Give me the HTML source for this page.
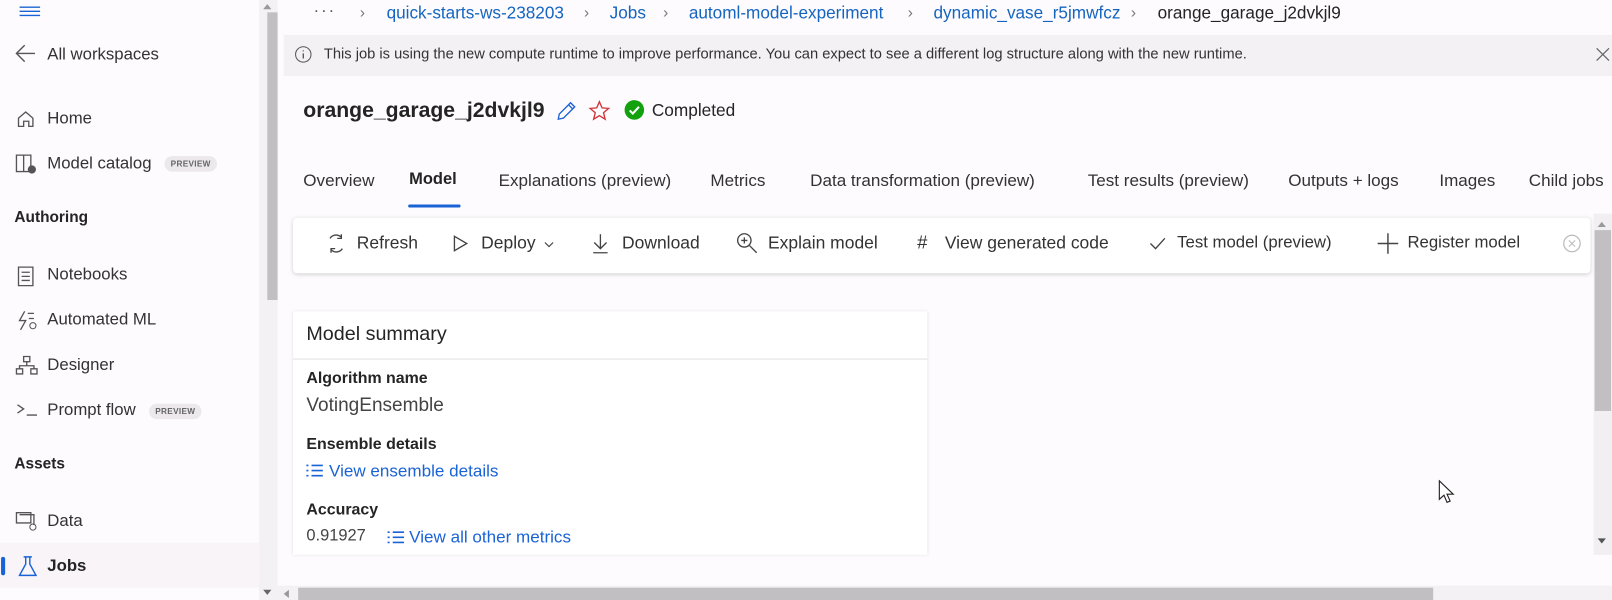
<!DOCTYPE html>
<html><head><meta charset="utf-8"><style>
*{margin:0;padding:0;box-sizing:border-box}
html,body{width:1612px;height:600px;overflow:hidden;background:#fdfbfd}
body{font-family:"Liberation Sans",sans-serif;color:#242424}
#w{position:absolute;left:0;top:0;width:1568px;height:584px;transform:scale(1.0281,1.0274);transform-origin:0 0}
.a{position:absolute;white-space:nowrap}
.side{left:0;top:0;width:252px;height:584px;background:#fdfbfd}
.nav{font-size:16.3px;color:#333}
.hd{font-size:15px;font-weight:bold;color:#242424}
.pv{font-size:8px;font-weight:bold;color:#666;background:#ece8ec;border-radius:9px;padding:3px 6px;letter-spacing:.3px}
.bc{font-size:16.7px;color:#1565c0;top:3px}
.sep{color:#777;font-size:15px;top:4px}
.tab{font-size:16.6px;color:#333;top:166px}
.tb{font-size:17px;color:#333;top:227px}
</style></head><body><div id="w">
<div class="a side"></div>
<div class="a" style="left:252px;top:0;width:18px;height:584px;background:#f3f1f3"></div>
<div class="a" style="left:260px;top:12px;width:10px;height:280px;background:#c1bfc1"></div>
<div class="a" style="left:256px;top:574px;border:4px solid transparent;border-top:5px solid #666"></div>
<div class="a" style="left:256px;top:0px;border:4px solid transparent;border-bottom:5px solid #999"></div>

<svg class="a" style="left:19px;top:6px" width="22" height="10"><path d="M0 1h20M0 5h20M0 9h20" stroke="#1a63d6" stroke-width="1.3"/></svg>
<svg class="a" style="left:14px;top:42px" width="22" height="20"><path d="M20 10H2M10 2L2 10l8 8" stroke="#555" fill="none" stroke-width="1.4"/></svg>
<div class="a nav" style="left:46px;top:44px">All workspaces</div>

<svg class="a" style="left:16px;top:106px" width="20" height="20"><path d="M2 9L9 3l7 6v8h-4v-5H7v5H2z" stroke="#555" fill="none" stroke-width="1.3"/></svg>
<div class="a nav" style="left:46px;top:106px">Home</div>
<svg class="a" style="left:15px;top:149px" width="22" height="22"><path d="M1 2h14v16H1zM8 2v16" stroke="#555" fill="none" stroke-width="1.3"/><circle cx="16" cy="16" r="4" fill="#555"/></svg>
<div class="a nav" style="left:46px;top:150px">Model catalog</div>
<div class="a pv" style="left:160px;top:152px">PREVIEW</div>
<div class="a hd" style="left:14px;top:203px">Authoring</div>

<svg class="a" style="left:17px;top:258px" width="18" height="22"><path d="M1 2h14v18H1zM4 7h8M4 11h8M4 15h8" stroke="#555" fill="none" stroke-width="1.3"/></svg>
<div class="a nav" style="left:46px;top:258px">Notebooks</div>
<svg class="a" style="left:16px;top:301px" width="22" height="22"><path d="M8 2l-5 9h6l-5 9M11 4h6M12 9h5" stroke="#555" fill="none" stroke-width="1.3"/><circle cx="16" cy="16" r="3" stroke="#555" fill="none"/></svg>
<div class="a nav" style="left:46px;top:302px">Automated ML</div>
<svg class="a" style="left:15px;top:345px" width="22" height="22"><path d="M8 2h6v5H8zM1 14h6v5H1zM15 14h6v5h-6zM11 7v4M4 14v-3h14v3" stroke="#555" fill="none" stroke-width="1.3"/></svg>
<div class="a nav" style="left:46px;top:346px">Designer</div>
<svg class="a" style="left:16px;top:390px" width="22" height="18"><path d="M1 4l6 4-6 4M10 14h10" stroke="#555" fill="none" stroke-width="1.3"/></svg>
<div class="a nav" style="left:46px;top:390px">Prompt flow</div>
<div class="a pv" style="left:145px;top:393px">PREVIEW</div>
<div class="a hd" style="left:14px;top:443px">Assets</div>
<svg class="a" style="left:15px;top:497px" width="22" height="22"><path d="M1 2h14v10H1zM4 4h14v10" stroke="#555" fill="none" stroke-width="1.3"/><circle cx="17" cy="16" r="3" stroke="#555" fill="none"/></svg>
<div class="a nav" style="left:46px;top:498px">Data</div>
<div class="a" style="left:0;top:528px;width:252px;height:44px;background:#f8f4f8"></div>
<div class="a" style="left:1px;top:542px;width:4px;height:18px;background:#1a63d6;border-radius:2px"></div>
<svg class="a" style="left:16px;top:540px" width="22" height="22"><path d="M7 2h8M9 2v7L3 20h16L13 9V2" stroke="#1a63d6" fill="none" stroke-width="1.4"/></svg>
<div class="a nav" style="left:46px;top:542px;font-weight:bold;color:#242424">Jobs</div>

<div class="a" style="left:305px;top:2px;font-size:16px;color:#555;letter-spacing:2px">···</div>
<div class="a sep" style="left:350px">›</div>
<div class="a bc" style="left:376px">quick-starts-ws-238203</div>
<div class="a sep" style="left:568px">›</div>
<div class="a bc" style="left:593px">Jobs</div>
<div class="a sep" style="left:645px">›</div>
<div class="a bc" style="left:670px">automl-model-experiment</div>
<div class="a sep" style="left:883px">›</div>
<div class="a bc" style="left:908px">dynamic_vase_r5jmwfcz</div>
<div class="a sep" style="left:1100px">›</div>
<div class="a" style="left:1126px;top:3px;font-size:16.7px;color:#242424">orange_garage_j2dvkjl9</div>

<div class="a" style="left:276px;top:34px;width:1292px;height:40px;background:#f4f1f4"></div>
<svg class="a" style="left:286px;top:44px" width="18" height="18"><circle cx="9" cy="9" r="7.5" stroke="#555" fill="none"/><path d="M9 8v5M9 5v1" stroke="#555" stroke-width="1.3"/></svg>
<div class="a" style="left:315px;top:45px;font-size:14.3px;color:#333">This job is using the new compute runtime to improve performance. You can expect to see a different log structure along with the new runtime.</div>
<svg class="a" style="left:1552px;top:46px" width="14" height="14"><path d="M1 1l12 12M13 1L1 13" stroke="#666" stroke-width="1.2"/></svg>

<div class="a" style="left:295px;top:96px;font-size:20.6px;font-weight:bold;color:#242424">orange_garage_j2dvkjl9</div>
<svg class="a" style="left:540px;top:97px" width="22" height="22"><path d="M3 19l1-5L15 3l4 4L8 18zM13 5l4 4" stroke="#1a63d6" fill="none" stroke-width="1.3"/></svg>
<svg class="a" style="left:572px;top:97px" width="22" height="22"><path d="M11 2l2.6 6 6.4.5-5 4.2 1.6 6.3L11 15.6 5.4 19 7 12.7 2 8.5 8.4 8z" stroke="#d13438" fill="none" stroke-width="1.3"/></svg>
<svg class="a" style="left:607px;top:97px" width="22" height="22"><circle cx="10" cy="10" r="9.5" fill="#13a10e"/><path d="M5.5 10.5l3 3 6-6.5" stroke="#fff" fill="none" stroke-width="2"/></svg>
<div class="a" style="left:634px;top:98px;font-size:16.8px;color:#242424">Completed</div>

<div class="a tab" style="left:295px">Overview</div>
<div class="a tab" style="left:398px;font-weight:bold;color:#242424;font-size:16px">Model</div>
<div class="a" style="left:397px;top:199px;width:51px;height:3px;background:#1a63d6;border-radius:2px"></div>
<div class="a tab" style="left:485px">Explanations (preview)</div>
<div class="a tab" style="left:691px">Metrics</div>
<div class="a tab" style="left:788px">Data transformation (preview)</div>
<div class="a tab" style="left:1058px">Test results (preview)</div>
<div class="a tab" style="left:1253px">Outputs + logs</div>
<div class="a tab" style="left:1400px">Images</div>
<div class="a tab" style="left:1487px">Child jobs</div>

<div class="a" style="left:285px;top:212px;width:1262px;height:54px;background:#fff;border-radius:4px;box-shadow:0 1px 4px rgba(0,0,0,.18)"></div>
<svg class="a" style="left:316px;top:226px" width="22" height="22"><path d="M5 6a7 7 0 0 1 11-1M17 16a7 7 0 0 1-11 1M16 2v4h-4M6 20v-4h4" stroke="#444" fill="none" stroke-width="1.3"/></svg>
<div class="a tb" style="left:347px">Refresh</div>
<svg class="a" style="left:440px;top:228px" width="16" height="18"><path d="M2 2l12 7-12 7z" stroke="#444" fill="none" stroke-width="1.3"/></svg>
<div class="a tb" style="left:468px">Deploy</div>
<svg class="a" style="left:528px;top:234px" width="12" height="8"><path d="M2 2l4 4 4-4" stroke="#444" fill="none" stroke-width="1.1"/></svg>
<svg class="a" style="left:575px;top:226px" width="18" height="22"><path d="M9 2v14M3 10l6 6 6-6M2 20h14" stroke="#444" fill="none" stroke-width="1.3"/></svg>
<div class="a tb" style="left:605px">Download</div>
<svg class="a" style="left:716px;top:226px" width="22" height="22"><circle cx="8" cy="8" r="6.5" stroke="#444" fill="none" stroke-width="1.3"/><path d="M13 13l7 7M8 5v6M5 8h6" stroke="#444" stroke-width="1.3"/></svg>
<div class="a tb" style="left:747px">Explain model</div>
<div class="a tb" style="left:892px;font-size:18px;top:226px">#</div>
<div class="a tb" style="left:919px">View generated code</div>
<svg class="a" style="left:1117px;top:230px" width="18" height="14"><path d="M2 7l5 5L16 2" stroke="#444" fill="none" stroke-width="1.3"/></svg>
<div class="a tb" style="left:1145px;font-size:16.3px">Test model (preview)</div>
<svg class="a" style="left:1339px;top:226px" width="22" height="22"><path d="M11 1v20M1 11h20" stroke="#444" stroke-width="1.4"/></svg>
<div class="a tb" style="left:1369px;font-size:16.3px">Register model</div>
<svg class="a" style="left:1519px;top:227px" width="20" height="20"><circle cx="10" cy="10" r="8" stroke="#bbb" fill="none" stroke-width="1.2"/><path d="M7 7l6 6M13 7l-6 6" stroke="#bbb"/></svg>

<div class="a" style="left:1550px;top:208px;width:18px;height:332px;background:#f1eff1"></div>
<div class="a" style="left:1551px;top:224px;width:16px;height:176px;background:#c1bfc1"></div>
<div class="a" style="left:1554px;top:212px;border:4px solid transparent;border-bottom:5px solid #999"></div>
<div class="a" style="left:1554px;top:524px;border:4px solid transparent;border-top:5px solid #555"></div>

<div class="a" style="left:285px;top:303px;width:617px;height:237px;background:#fff;box-shadow:0 0 3px rgba(0,0,0,.12)"></div>
<div class="a" style="left:285px;top:349px;width:617px;height:1px;background:#e0e0e0"></div>
<div class="a" style="left:298px;top:315px;font-size:19.2px;color:#242424">Model summary</div>
<div class="a" style="left:298px;top:360px;font-size:15.5px;font-weight:bold;color:#242424">Algorithm name</div>
<div class="a" style="left:298px;top:383px;font-size:18.5px;color:#444">VotingEnsemble</div>
<div class="a" style="left:298px;top:424px;font-size:15.5px;font-weight:bold;color:#242424">Ensemble details</div>
<svg class="a" style="left:297px;top:451px" width="18" height="14"><path d="M1 2h2M1 7h2M1 12h2M6 2h11M6 7h11M6 12h11" stroke="#1a63d6" stroke-width="1.6"/></svg>
<div class="a" style="left:320px;top:449px;font-size:16.6px;color:#1a63d6">View ensemble details</div>
<div class="a" style="left:298px;top:488px;font-size:15.5px;font-weight:bold;color:#242424">Accuracy</div>
<div class="a" style="left:298px;top:513px;font-size:16px;color:#444">0.91927</div>
<svg class="a" style="left:376px;top:516px" width="18" height="14"><path d="M1 2h2M1 7h2M1 12h2M6 2h11M6 7h11M6 12h11" stroke="#1a63d6" stroke-width="1.6"/></svg>
<div class="a" style="left:398px;top:513px;font-size:16.6px;color:#1a63d6">View all other metrics</div>

<svg class="a" style="left:1399px;top:467px" width="18" height="26"><path d="M1 1v18l4.5-4 3 7 3-1.3-3-6.7h6z" fill="#fff" stroke="#222" stroke-width="1.1"/></svg>

<div class="a" style="left:270px;top:570px;width:1298px;height:14px;background:#f3f1f3"></div>
<div class="a" style="left:290px;top:572px;width:1104px;height:12px;background:#c1bfc1"></div>
<div class="a" style="left:276px;top:574px;border:4px solid transparent;border-right:5px solid #999;border-left:0"></div>
</div></body></html>
